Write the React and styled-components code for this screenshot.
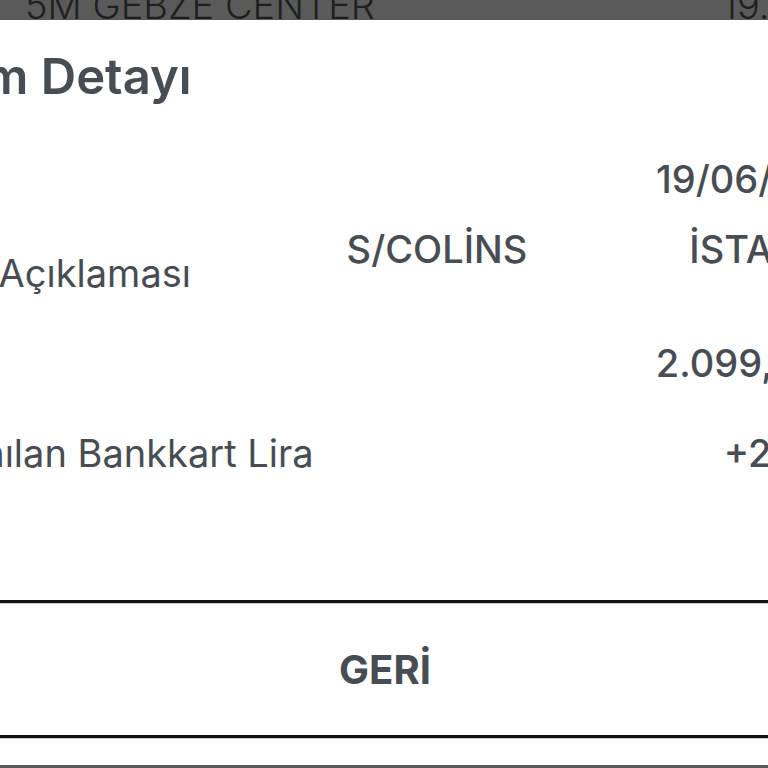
import React from "react";
import styled, { createGlobalStyle } from "styled-components";

const GlobalStyle = createGlobalStyle`
  html, body {
    margin: 0;
    padding: 0;
    background: #5a5a5a;
    overflow: hidden;
  }
  body {
    font-family: Inter, "Noto Sans", sans-serif;
  }
`;

const Screen = styled.div`
  width: 768px;
  height: 768px;
  overflow: hidden;
  display: flex;
  flex-direction: column;
  background: #5a5a5a;
`;

// the list row behind the dimmed overlay, mostly hidden
const BackdropRow = styled.div`
  height: 20px;
  flex-shrink: 0;
  overflow: hidden;
  display: grid;
  grid-template-columns: 697px auto;
  padding-left: 25px;
  color: #1f1f1f;
  font-size: 38px;
  font-weight: 300;
  line-height: 38px;
  white-space: nowrap;

  span {
    margin-top: -14px;
  }
`;

const Sheet = styled.div`
  height: 745px;
  flex-shrink: 0;
  width: 967px;
  margin-left: -140px;
  padding: 0 50px 0 33px;
  background: #fff;
  display: flex;
  flex-direction: column;
  color: #474d52;
`;

const Title = styled.h1`
  margin: 26px 0 0 9px;
  font-size: 49px;
  line-height: 62px;
  font-weight: 600;
  white-space: nowrap;
`;

const List = styled.div`
  margin-top: 47px;
  display: flex;
  flex-direction: column;
`;

const Row = styled.div`
  display: flex;
  align-items: center;
  justify-content: space-between;
  margin-top: ${(p) => p.$gap || 0}px;
  font-size: 38px;
  line-height: 48px;
  white-space: nowrap;
`;

const Label = styled.div`
  font-weight: 400;
`;

const Value = styled.div`
  font-weight: 500;
  text-align: right;
  display: flex;
  flex-direction: column;
  align-items: flex-end;
`;

const ValueLine = styled.div`
  display: flex;
  gap: ${(p) => p.$gap || 0}px;
  margin-right: ${(p) => p.$shift || 0}px;
`;

const Footer = styled.div`
  margin-top: auto;
  margin-bottom: 27px;
  margin-left: -33px;
  margin-right: -50px;
  height: 132px;
  border-top: 3px solid #111;
  border-bottom: 3px solid #111;
  box-shadow: inset 0 1px 0 #cfcfcf, 0 1px 0 #cfcfcf;
  display: flex;
  align-items: center;
  justify-content: center;
`;

const BackButton = styled.button`
  border: 0;
  background: none;
  padding: 0;
  font-family: Inter, "Noto Sans", sans-serif;
  font-size: 40px;
  font-weight: 700;
  color: #474d52;
  cursor: pointer;
`;

const rows = [
  { label: "Tarih", value: ["19/06/2019"] },
  { label: "İşlem Açıklaması", value: [["S/COLİNS", "İSTANBUL"], "TR"], gap: 22 },
  { label: "Tutar", value: ["2.099,00TL"], gap: 18, shift: -7 },
  { label: "Kazanılan Bankkart Lira", value: ["+20,99"], gap: 42, shift: 6 },
];

export default function App() {
  return (
    <Screen>
      <GlobalStyle />
      <BackdropRow>
        <span>5M GEBZE CENTER</span>
        <span>19.06.2019</span>
      </BackdropRow>
      <Sheet>
        <Title>İşlem Detayı</Title>
        <List>
          {rows.map((r) => (
            <Row key={r.label} $gap={r.gap}>
              <Label>{r.label}</Label>
              <Value>
                {r.value.map((v, i) =>
                  Array.isArray(v) ? (
                    <ValueLine key={i} $gap={162} $shift={-16}>
                      {v.map((part) => (
                        <span key={part}>{part}</span>
                      ))}
                    </ValueLine>
                  ) : (
                    <ValueLine key={i} $shift={r.shift}>
                      {v}
                    </ValueLine>
                  )
                )}
              </Value>
            </Row>
          ))}
        </List>
        <Footer>
          <BackButton>GERİ</BackButton>
        </Footer>
      </Sheet>
    </Screen>
  );
}
